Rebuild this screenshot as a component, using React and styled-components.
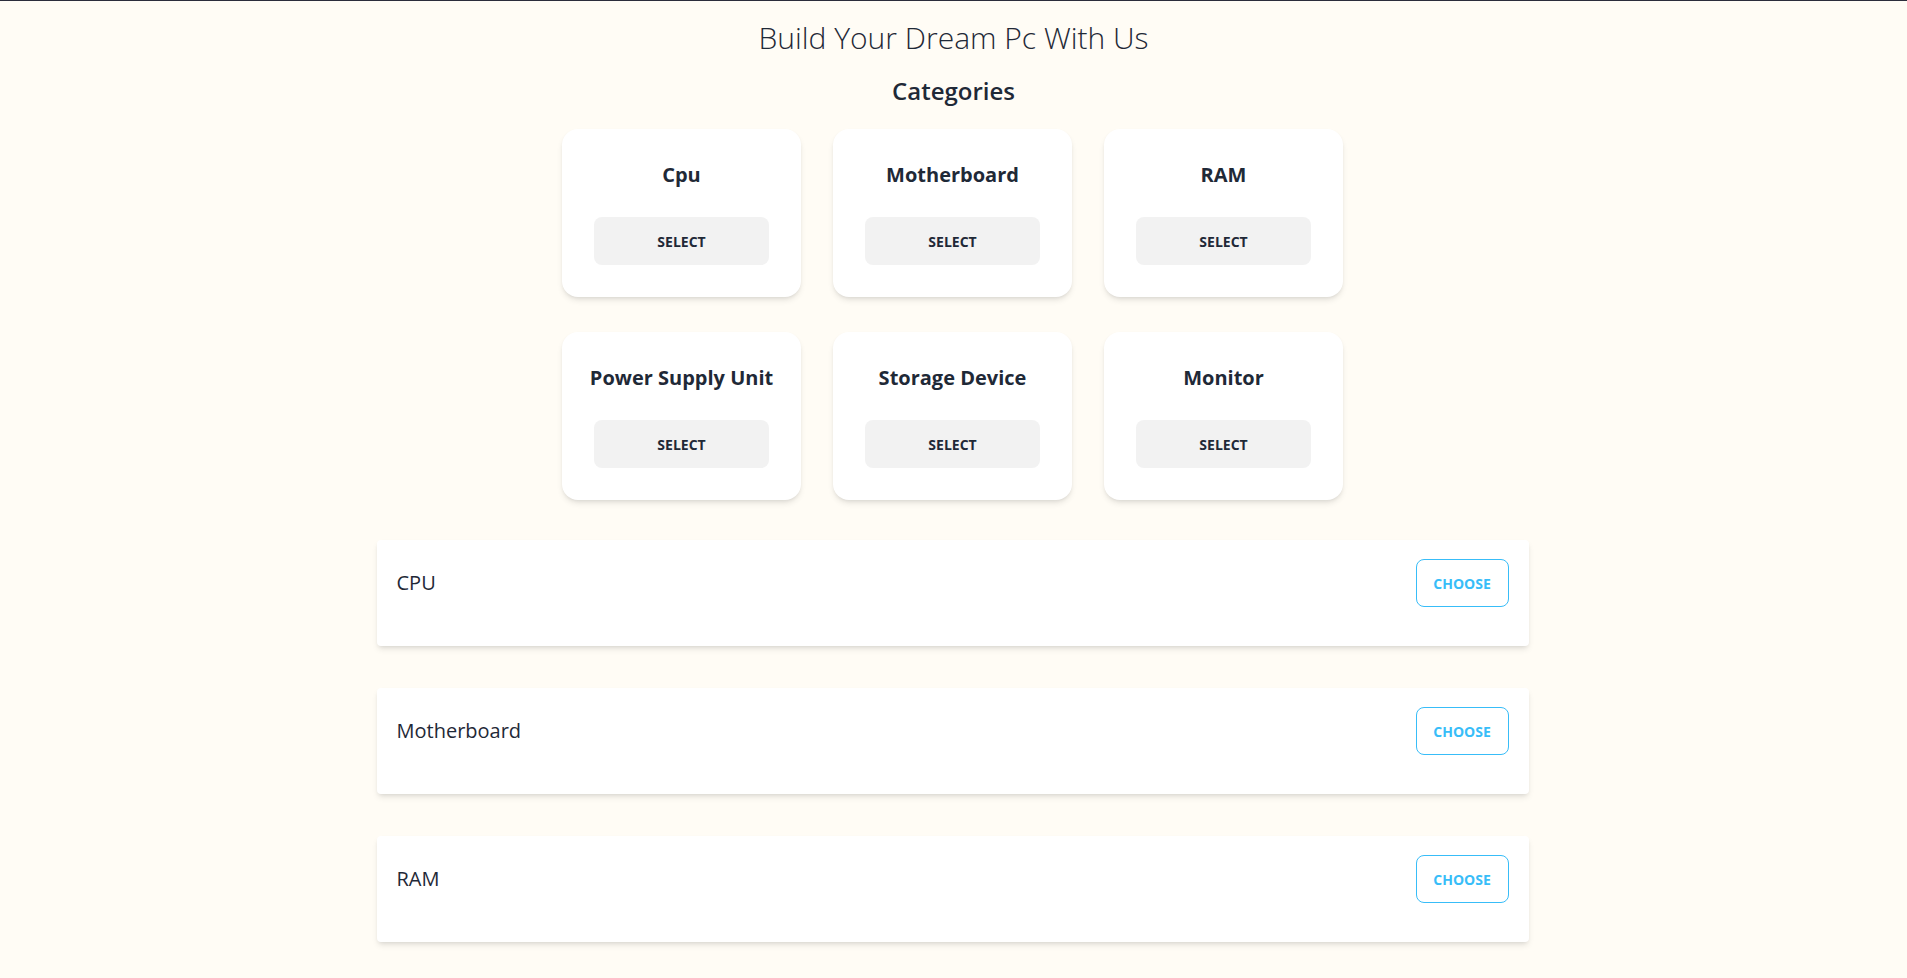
import React from "react";
import styled, { createGlobalStyle } from "styled-components";

const GlobalStyle = createGlobalStyle`
  html, body {
    margin: 0;
    padding: 0;
    background-color: #fffcf5;
    font-family: "Open Sans", "Noto Sans", sans-serif;
    color: #1f2937;
  }
  ::-webkit-scrollbar {
    display: none;
  }
  * {
    box-sizing: border-box;
  }
`;

const Page = styled.div`
  border-top: 1px solid #2b2d3b;
  padding-bottom: 16px;
`;

const Title = styled.h1`
  margin: 19px 0 0;
  text-align: center;
  font-size: 30px;
  line-height: 36px;
  font-weight: 300;
`;

const SubTitle = styled.h2`
  margin: 19px 0 0;
  text-align: center;
  font-size: 24px;
  line-height: 32px;
  font-weight: 600;
`;

const CardGrid = styled.div`
  display: grid;
  grid-template-columns: repeat(3, 239px);
  column-gap: 32px;
  row-gap: 35px;
  justify-content: center;
  margin: 22px 2px 0 0;
`;

const Card = styled.div`
  display: flex;
  flex-direction: column;
  align-items: center;
  background-color: #ffffff;
  border-radius: 16px;
  padding: 32px;
  box-shadow: 0 4px 6px -1px rgba(0, 0, 0, 0.1), 0 2px 4px -2px rgba(0, 0, 0, 0.1);
`;

const CardTitle = styled.h3`
  margin: 0 0 28px;
  font-size: 20px;
  line-height: 28px;
  font-weight: 700;
  text-align: center;
  white-space: nowrap;
`;

const SelectButton = styled.button`
  width: 100%;
  height: 48px;
  border: none;
  border-radius: 8px;
  background-color: #f2f2f2;
  color: #1f2937;
  font-family: inherit;
  font-size: 14px;
  font-weight: 700;
  text-transform: uppercase;
  cursor: pointer;
`;

const List = styled.div`
  width: 1152px;
  margin: 40px auto 0;
  position: relative;
  left: -1px;
  display: flex;
  flex-direction: column;
  gap: 42px;
`;

const Row = styled.div`
  display: flex;
  align-items: flex-start;
  justify-content: space-between;
  height: 106px;
  padding: 19px 20px 0;
  background-color: #ffffff;
  border-radius: 4px;
  box-shadow: 0 4px 6px -1px rgba(0, 0, 0, 0.1), 0 2px 4px -2px rgba(0, 0, 0, 0.1);
`;

const RowLabel = styled.span`
  font-size: 20px;
  line-height: 48px;
  font-weight: 500;
`;

const ChooseButton = styled.button`
  height: 48px;
  width: 93px;
  padding: 0;
  border: 1px solid #38bdf8;
  border-radius: 8px;
  background: transparent;
  color: #38bdf8;
  font-family: inherit;
  font-size: 14px;
  font-weight: 700;
  text-transform: uppercase;
  cursor: pointer;
`;

const categories = [
  "Cpu",
  "Motherboard",
  "RAM",
  "Power Supply Unit",
  "Storage Device",
  "Monitor",
];

const parts = ["CPU", "Motherboard", "RAM"];

const App = () => {
  return (
    <>
      <GlobalStyle />
      <Page>
        <Title>Build Your Dream Pc With Us</Title>
        <SubTitle>Categories</SubTitle>
        <CardGrid>
          {categories.map((name) => (
            <Card key={name}>
              <CardTitle>{name}</CardTitle>
              <SelectButton>Select</SelectButton>
            </Card>
          ))}
        </CardGrid>
        <List>
          {parts.map((part) => (
            <Row key={part}>
              <RowLabel>{part}</RowLabel>
              <ChooseButton>Choose</ChooseButton>
            </Row>
          ))}
        </List>
      </Page>
    </>
  );
};

export default App;
